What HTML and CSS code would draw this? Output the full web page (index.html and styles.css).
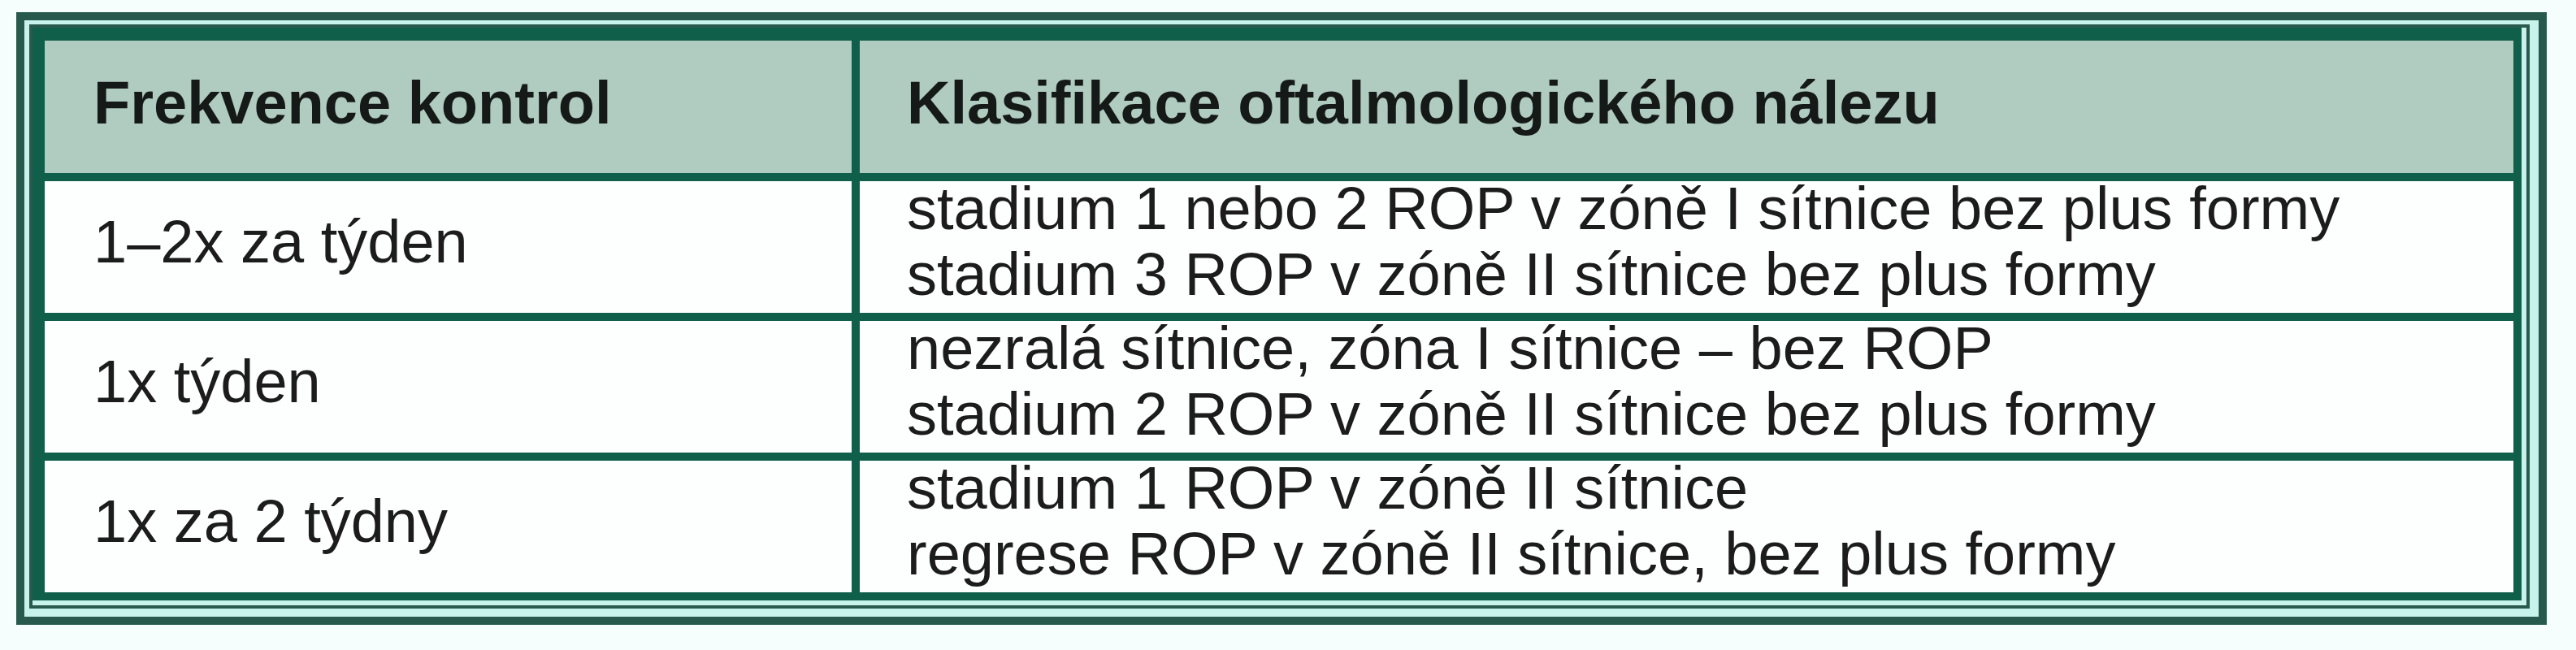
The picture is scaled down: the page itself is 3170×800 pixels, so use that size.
FILE: index.html
```html
<!DOCTYPE html>
<html lang="cs">
<head>
<meta charset="utf-8">
<title>Frekvence kontrol</title>
<link rel="stylesheet" href="styles.css">
</head>
<body>
<div class="frame">
  <div class="inner">
    <div class="table">
      <div class="cell head c1">Frekvence kontrol</div>
      <div class="cell head c2">Klasifikace oftalmologického nálezu</div>

      <div class="cell c1">1–2x za týden</div>
      <div class="cell c2">
        <div class="line">stadium 1 nebo 2 ROP v zóně I sítnice bez plus formy</div>
        <div class="line">stadium 3 ROP v zóně II sítnice bez plus formy</div>
      </div>

      <div class="cell c1">1x týden</div>
      <div class="cell c2">
        <div class="line">nezralá sítnice, zóna I sítnice – bez ROP</div>
        <div class="line">stadium 2 ROP v zóně II sítnice bez plus formy</div>
      </div>

      <div class="cell c1">1x za 2 týdny</div>
      <div class="cell c2">
        <div class="line">stadium 1 ROP v zóně II sítnice</div>
        <div class="line">regrese ROP v zóně II sítnice, bez plus formy</div>
      </div>
    </div>
  </div>
</div>
</body>
</html>
```

FILE: styles.css
```css
html, body {
  margin: 0;
  padding: 0;
  background: #f6fefd;
}

body {
  width: 3170px;
  height: 800px;
  overflow: hidden;
  font-family: "Liberation Sans", Arial, sans-serif;
  color: #1c1c1c;
}

.frame {
  margin: 15px 0 0 20px;
  width: 3114px;
  box-sizing: border-box;
  border: 10px solid #275a4d;
  background: #c8f3ed;
  padding: 5px 11px 10px 6px;
}

.inner {
  border: 4px solid #2a5a4e;
  background: #c8f3ed;
  padding: 0 6px 6px 0;
}

.table {
  display: grid;
  grid-template-columns: 993px 1fr;
  grid-template-rows: 163px 162px 162px 162px;
  gap: 10px;
  padding: 16px 10px 10px 15px;
  background: #0f5f4b;
  border-top: 0;
}

.cell {
  background: #fcfffe;
  display: flex;
  flex-direction: column;
  justify-content: center;
  font-size: 74px;
  line-height: 81px;
  white-space: nowrap;
  padding-bottom: 14px;
  box-sizing: border-box;
}

.c1 {
  padding-left: 60px;
}

.c2 {
  padding-left: 58px;
}

.head {
  background: #b0cbc0;
  font-weight: bold;
  padding-bottom: 10px;
  color: #151a18;
}
```
